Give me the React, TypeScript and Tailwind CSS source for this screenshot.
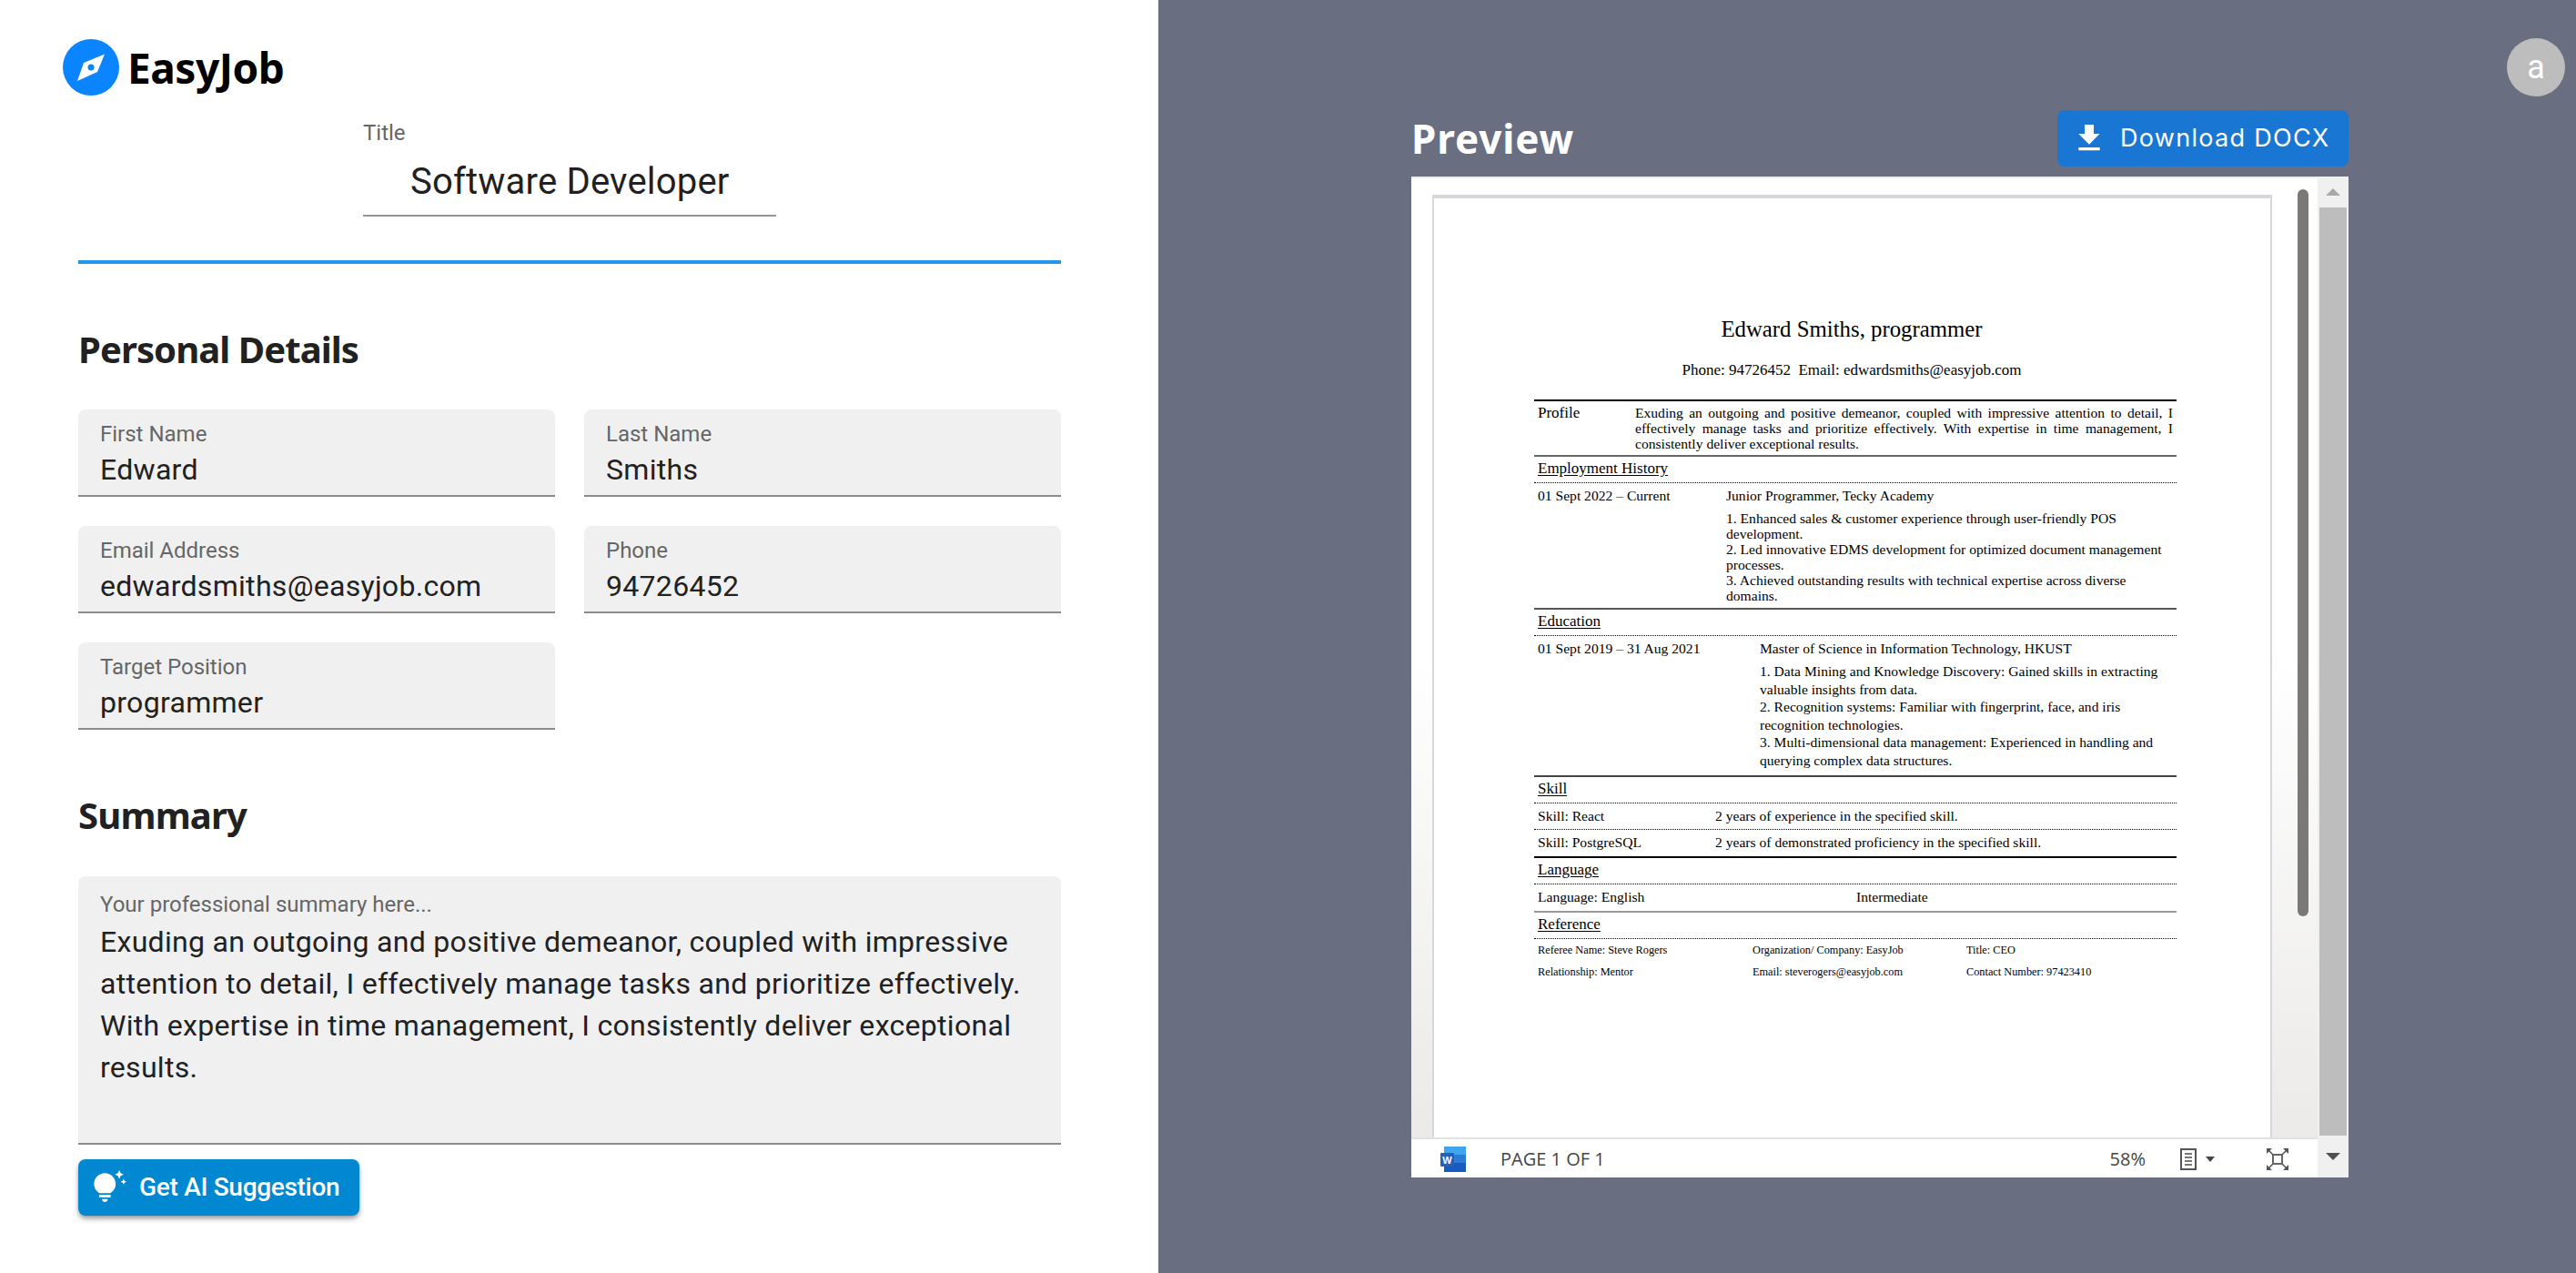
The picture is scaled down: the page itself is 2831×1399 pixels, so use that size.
const roboto = "font-['Roboto',sans-serif]";
const heading = "font-['Noto_Sans',sans-serif]";

function Field({ label, value }: { label: string; value: string }) {
  return (
    <div className="h-[96px] rounded-t-lg border-b-2 border-[#8c8c8c] bg-[#f0f0f0] px-6 pt-[14px]">
      <div className="text-[24px] leading-[26px] text-[#666666]">{label}</div>
      <div className="mt-[6px] text-[32px] leading-[40px] tracking-[0.3px] text-[#212121]">{value}</div>
    </div>
  );
}

function Editor() {
  return (
    <div className={`flex h-[1399px] w-[1273px] flex-none flex-col bg-white ${roboto}`}>
      <div className="flex items-center gap-[9px] pl-[69px] pt-[43px]">
        <svg viewBox="0 0 62 62" className="h-[62px] w-[62px]">
          <circle cx="31" cy="31" r="31" fill="#0a84ff" />
          <path d="M46 16.5 38 36 16 46 23 26Z" fill="#fff" />
          <circle cx="31" cy="31" r="3.5" fill="#0a84ff" />
        </svg>
        <div className={`text-[46px] leading-[62px] font-bold tracking-[-0.5px] text-black ${heading}`}>EasyJob</div>
      </div>
      <div className="pl-[86px] pr-[107px]">
        <div className="mx-auto mt-[28px] w-[454px]">
          <div className="text-[24px] leading-[26px] text-[#666666]">Title</div>
          <div className="h-[79px] border-b-2 border-[#949494] pl-[52px] pt-[17px] text-[40px] leading-[48px] tracking-[0.2px] text-[#212121]">
            Software Developer
          </div>
        </div>
        <div className="mt-[48px] h-1 bg-[#2196f3]"></div>
        <h2 className={`mt-[66px] text-[40px] leading-[56px] font-bold tracking-[-0.9px] text-[#212121] ${heading}`}>Personal Details</h2>
        <div className="mt-[38px] grid grid-cols-2 gap-x-[32px] gap-y-[32px]">
          <Field label="First Name" value="Edward" />
          <Field label="Last Name" value="Smiths" />
          <Field label="Email Address" value="edwardsmiths@easyjob.com" />
          <Field label="Phone" value="94726452" />
          <Field label="Target Position" value="programmer" />
        </div>
        <h2 className={`mt-[66px] text-[40px] leading-[56px] font-bold tracking-[-0.8px] text-[#212121] ${heading}`}>Summary</h2>
        <div className="mt-[39px] h-[295px] rounded-t-lg border-b-2 border-[#8c8c8c] bg-[#f0f0f0] px-6 pt-[18px]">
          <div className="text-[24px] leading-[26px] text-[#666666]">Your professional summary here...</div>
          <div className="mt-[5px] text-[32px] leading-[46px] tracking-[0.3px] text-[#212121]">
            Exuding an outgoing and positive demeanor, coupled with impressive attention to detail, I effectively manage
            tasks and prioritize effectively. With expertise in time management, I consistently deliver exceptional
            results.
          </div>
        </div>
        <button className="mt-[16px] flex h-[62px] w-[309px] items-center gap-[14px] rounded-lg bg-[#0288d1] pl-[15px] text-[28px] font-medium tracking-[-0.3px] text-white shadow-[0_4px_6px_-1px_rgba(0,0,0,0.35),0_2px_4px_rgba(0,0,0,0.14)]">
          <svg viewBox="0 0 24 24" className="h-[38px] w-[38px] fill-white">
            <path d="M7 20h4c0 1.1-.9 2-2 2s-2-.9-2-2zm-2-1h8v-2H5v2zm11.5-9.5c0 3.82-2.66 5.86-3.77 6.5H5.27C4.16 15.36 1.5 13.32 1.5 9.5 1.5 5.36 4.86 2 9 2s7.5 3.36 7.5 7.5zm4.87-2.13L20 8l1.37.63L22 10l.63-1.37L24 8l-1.37-.63L22 6l-.63 1.37zM19 6l.94-2.06L22 3l-2.06-.94L19 0l-.94 2.06L16 3l2.06.94L19 6z" />
          </svg>
          Get AI Suggestion
        </button>
      </div>
    </div>
  );
}

function Dotted() {
  return <div className="border-t border-dotted border-black"></div>;
}

function SectionTitle({ children, h = 28 }: { children: string; h?: number }) {
  return (
    <div className="pl-[4px] pt-[4px] text-[17px]" style={{ height: h }}>
      <span className="underline underline-offset-2">{children}</span>
    </div>
  );
}

function Resume() {
  return (
    <div className="pl-[110px] pr-[103px] pt-[130px] font-['Liberation_Serif',serif] text-[15.6px] leading-[17px] text-black">
      <div className="pr-[8px] text-center text-[24.8px] leading-[28px]">Edward Smiths, programmer</div>
      <div className="mt-[22px] pr-[8px] text-center text-[17px] leading-[18px] whitespace-pre">Phone: 94726452  Email: edwardsmiths@easyjob.com</div>
      <div className="mt-[23px] border-t-2 border-black"></div>
      <div className="flex h-[59px] pl-[4px] pr-[4px] pt-[4px]">
        <div className="w-[107px] flex-none text-[17px]">Profile</div>
        <div className="text-justify">
          Exuding an outgoing and positive demeanor, coupled with impressive attention to detail, I effectively manage
          tasks and prioritize effectively. With expertise in time management, I consistently deliver exceptional results.
        </div>
      </div>
      <div className="border-t-2 border-[#666666]"></div>
      <SectionTitle>Employment History</SectionTitle>
      <Dotted />
      <div className="flex h-[137px] pl-[4px] pt-[5px] whitespace-nowrap">
        <div className="w-[207px] flex-none">01 Sept 2022 – Current</div>
        <div>
          <div>Junior Programmer, Tecky Academy</div>
          <div className="mt-[8px]">
            1. Enhanced sales &amp; customer experience through user-friendly POS
            <br />
            development.
            <br />
            2. Led innovative EDMS development for optimized document management
            <br />
            processes.
            <br />
            3. Achieved outstanding results with technical expertise across diverse
            <br />
            domains.
          </div>
        </div>
      </div>
      <div className="border-t-2 border-[#555555]"></div>
      <SectionTitle>Education</SectionTitle>
      <Dotted />
      <div className="flex h-[153px] pl-[4px] pt-[5px] whitespace-nowrap">
        <div className="w-[244px] flex-none">01 Sept 2019 – 31 Aug 2021</div>
        <div>
          <div>Master of Science in Information Technology, HKUST</div>
          <div className="mt-[7px] leading-[19.6px]">
            1. Data Mining and Knowledge Discovery: Gained skills in extracting
            <br />
            valuable insights from data.
            <br />
            2. Recognition systems: Familiar with fingerprint, face, and iris
            <br />
            recognition technologies.
            <br />
            3. Multi-dimensional data management: Experienced in handling and
            <br />
            querying complex data structures.
          </div>
        </div>
      </div>
      <div className="border-t-2 border-[#444444]"></div>
      <SectionTitle>Skill</SectionTitle>
      <Dotted />
      <div className="flex h-[28px] pl-[4px] pt-[5px]">
        <div className="w-[195px] flex-none">Skill: React</div>
        <div>2 years of experience in the specified skill.</div>
      </div>
      <Dotted />
      <div className="flex h-[29px] pl-[4px] pt-[5px]">
        <div className="w-[195px] flex-none">Skill: PostgreSQL</div>
        <div>2 years of demonstrated proficiency in the specified skill.</div>
      </div>
      <div className="border-t-2 border-black"></div>
      <SectionTitle>Language</SectionTitle>
      <Dotted />
      <div className="flex h-[29px] pl-[4px] pt-[5px]">
        <div className="w-[350px] flex-none">Language: English</div>
        <div>Intermediate</div>
      </div>
      <div className="border-t-2 border-[#999999]"></div>
      <SectionTitle>Reference</SectionTitle>
      <Dotted />
      <div className="grid grid-cols-[236px_235px_1fr] gap-y-[7px] pl-[4px] pt-[4px] text-[12.3px] leading-[17px] whitespace-nowrap">
        <div>Referee Name: Steve Rogers</div>
        <div>Organization/ Company: EasyJob</div>
        <div>Title: CEO</div>
        <div>Relationship: Mentor</div>
        <div>Email: steverogers@easyjob.com</div>
        <div>Contact Number: 97423410</div>
      </div>
    </div>
  );
}

function StatusBar() {
  return (
    <div className="flex h-[44px] flex-none items-center border-t-2 border-[#e1e1e1] bg-white pt-[2px] font-['Open_Sans',sans-serif] text-[20px] text-[#444444]">
      <svg viewBox="0 0 28 28" className="ml-[32px] h-[28px] w-[28px]">
        <rect x="4" y="0" width="24" height="28" rx="1" fill="#2b7cd3" />
        <rect x="4" y="0" width="24" height="9" fill="#41a5ee" />
        <rect x="4" y="18" width="24" height="10" fill="#185abd" />
        <rect x="0" y="7" width="15" height="15" rx="1" fill="#2560b8" />
        <text x="7.5" y="18.5" textAnchor="middle" fontSize="11" fill="#fff" fontFamily="Liberation Sans" fontWeight="700">W</text>
      </svg>
      <span className="ml-[38px]">PAGE 1 OF 1</span>
      <span className="ml-auto">58%</span>
      <svg viewBox="0 0 18 24" className="ml-[38px] h-[24px] w-[18px]">
        <rect x="1" y="1" width="16" height="22" fill="none" stroke="#555555" strokeWidth="2" />
        <path d="M5 6h8M5 10h8M5 14h8M5 18h8" stroke="#777777" strokeWidth="2" />
      </svg>
      <svg viewBox="0 0 10 6" className="ml-[10px] h-[6px] w-[10px] fill-[#444444]">
        <path d="M0 0h10L5 6Z" />
      </svg>
      <svg viewBox="0 0 26 26" className="ml-[56px] mr-[31px] h-[26px] w-[26px]">
        <rect x="8" y="8" width="10" height="10" fill="none" stroke="#666666" strokeWidth="2" />
        <path d="M1 1h6L1 7ZM25 1h-6l6 6ZM1 25h6l-6-6ZM25 25h-6l6-6Z" fill="#555555" />
        <path d="M3 3l5 5M23 3l-5 5M3 23l5-5M23 23l-5-5" stroke="#555555" strokeWidth="1.5" />
      </svg>
    </div>
  );
}

function PreviewPane() {
  return (
    <div className="relative h-[1399px] flex-1 bg-[#696e80] pl-[278px] pt-[121px]">
      <div className="absolute right-[12px] top-[42px] flex h-[64px] w-[64px] items-center justify-center rounded-full bg-[#bdbdbd] font-['Roboto',sans-serif] text-[36px] text-white">
        a
      </div>
      <div className="flex h-[62px] w-[1030px] items-center justify-between">
        <h2 className={`text-[44px] font-bold tracking-[0.9px] text-white ${heading}`}>Preview</h2>
        <button className="flex h-[62px] w-[320px] items-center gap-[14px] rounded-lg bg-[#1976d2] pl-[15px] font-['Inter',sans-serif] text-[27px] tracking-[1.3px] text-white">
          <svg viewBox="0 0 24 24" className="h-[40px] w-[40px] fill-white">
            <path d="M19 9h-4V3H9v6H5l7 7 7-7zM5 18v2h14v-2H5z" />
          </svg>
          Download DOCX
        </button>
      </div>
      <div className="mt-[11px] flex h-[1100px] w-[1030px]">
        <div className="flex min-w-0 flex-1 flex-col border-t-2 border-[#eeeeee] bg-white">
          <div className="relative min-h-0 flex-1 overflow-hidden bg-gradient-to-b from-white via-white to-[#ebeae8] pl-[23px] pt-[18px]">
            <div className="h-[1100px] w-[923px] border-[2px] border-t-[4px] border-[#d8d8dc] bg-white">
              <Resume />
            </div>
            <div className="absolute left-[974px] top-[12px] h-[799px] w-[12px] rounded-full bg-[#7a7977]"></div>
          </div>
          <StatusBar />
        </div>
        <div className="flex w-[34px] flex-none flex-col bg-[#f0f0f0]">
          <div className="flex h-[34px] items-center justify-center">
            <div className="h-0 w-0 border-x-[8px] border-b-[8px] border-x-transparent border-b-[#a9a9a9]"></div>
          </div>
          <div className="mx-[2px] h-[1020px] bg-[#bdbdbd]"></div>
          <div className="flex flex-1 items-center justify-center">
            <div className="h-0 w-0 border-x-[8px] border-t-[8px] border-x-transparent border-t-[#505050]"></div>
          </div>
        </div>
      </div>
    </div>
  );
}

export default function App() {
  return (
    <div className="flex h-[1399px] w-full overflow-hidden">
      <Editor />
      <PreviewPane />
    </div>
  );
}
